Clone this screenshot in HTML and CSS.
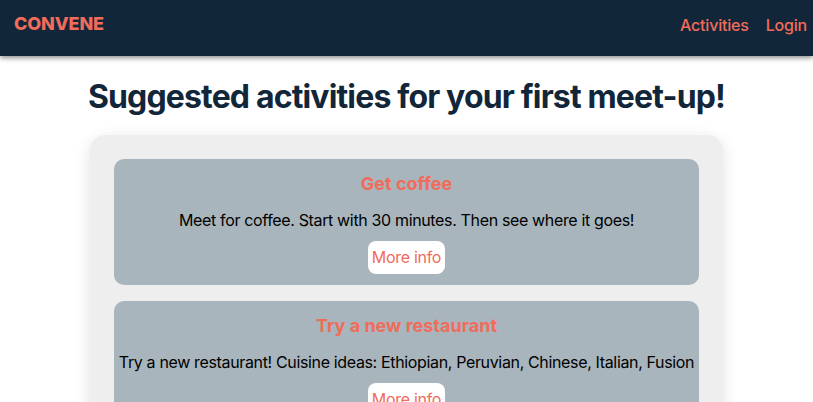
FILE: index.html
```html
<!DOCTYPE html>
<html>
<head>
<meta charset="utf-8">
<link rel="stylesheet" href="styles.css">
</head>
<body>
<header class="topbar">
  <div class="logo">CONVENE</div>
  <nav class="nav">
    <a href="#">Activities</a>
    <a href="#">Login</a>
  </nav>
</header>
<main class="main">
  <h1 class="title">Suggested activities for your first meet-up!</h1>
  <section class="panel">
    <div class="card">
      <h2 class="card-title">Get coffee</h2>
      <p class="card-text">Meet for coffee. Start with 30 minutes. Then see where it goes!</p>
      <button class="btn">More info</button>
    </div>
    <div class="card">
      <h2 class="card-title">Try a new restaurant</h2>
      <p class="card-text">Try a new restaurant! Cuisine ideas: Ethiopian, Peruvian, Chinese, Italian, Fusion</p>
      <button class="btn">More info</button>
    </div>
  </section>
</main>
</body>
</html>
```

FILE: styles.css
```css
* { box-sizing: border-box; }
html, body { margin: 0; padding: 0; overflow: hidden; }
body {
  font-family: Inter, "Noto Sans", sans-serif;
  background: #ffffff;
  color: #000;
  height: 402px;
}
.topbar {
  height: 56px;
  background: #12263a;
  display: flex;
  justify-content: space-between;
  align-items: flex-start;
  padding: 12px 6px 0 14px;
  box-shadow: 0 2px 5px rgba(0, 0, 0, 0.45);
  position: relative;
  z-index: 2;
}
.logo {
  color: #f06c5b;
  font-weight: 800;
  font-size: 18px;
  line-height: 24px;
  letter-spacing: -0.1px;
}
.nav {
  display: flex;
  gap: 17px;
}
.nav a {
  color: #f06c5b;
  text-decoration: none;
  font-size: 16px;
  font-weight: 500;
  line-height: 26px;
  letter-spacing: -0.2px;
}
.main {
  display: flex;
  flex-direction: column;
  align-items: center;
}
.title {
  margin: 21px 0 18px;
  font-size: 32px;
  line-height: 40px;
  font-weight: 700;
  color: #12263a;
  letter-spacing: -0.85px;
}
.panel {
  width: 633px;
  background: #eeeeee;
  border-radius: 16px;
  padding: 24px;
  display: flex;
  flex-direction: column;
  gap: 16px;
  box-shadow: 0 4px 16px rgba(0, 0, 0, 0.12);
}
.card {
  background: #a8b5bc;
  border-radius: 10px;
  padding: 13px 4px 11px;
  display: flex;
  flex-direction: column;
  align-items: center;
  text-align: center;
}
.card-title {
  margin: 0 0 12px;
  font-size: 18px;
  line-height: 24px;
  font-weight: 700;
  color: #f06c5b;
}
.card-text {
  margin: 0 0 9px;
  font-size: 16px;
  line-height: 24px;
  color: #000;
  letter-spacing: -0.35px;
  white-space: nowrap;
}
.btn {
  font-family: inherit;
  background: #ffffff;
  color: #f06c5b;
  border: none;
  border-radius: 8px;
  font-size: 16px;
  line-height: 25px;
  padding: 4px 4px;
  letter-spacing: -0.3px;
  cursor: pointer;
}
```
